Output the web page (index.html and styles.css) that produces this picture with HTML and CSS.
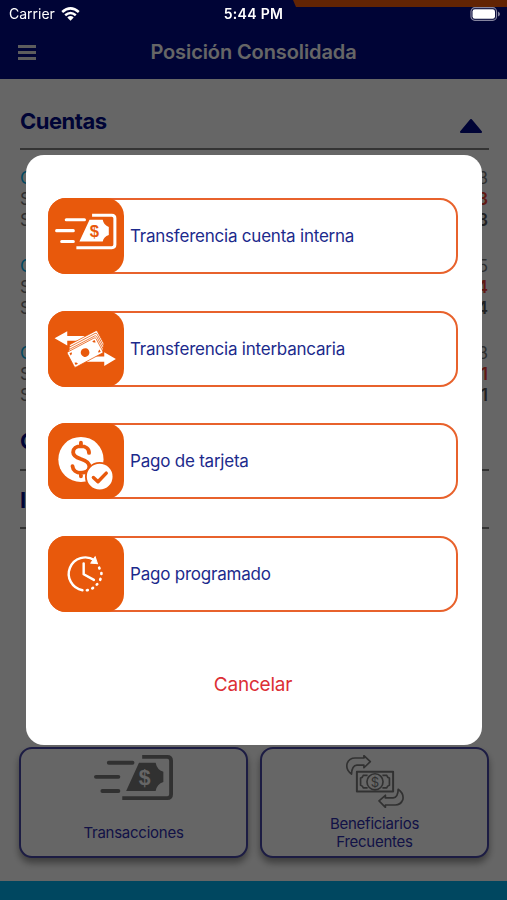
FILE: index.html
```
<!DOCTYPE html>
<html lang="es">

<head>
    <meta charset="UTF-8">
    <meta name="viewport" content="width=device-width, initial-scale=1.0">
    <title>Posición Consolidada</title>
    <link rel="stylesheet" href="styles.css">
</head>

<body>
    <div class="app">
        <div class="header">
            <div class="stripe"></div>
            <div class="menu"><span></span><span></span><span></span></div>
            <h1>Posición Consolidada</h1>
        </div>
        <div class="content">
            <div class="section-title first">
                <h2>Cuentas</h2>
                <svg class="caret" width="22" height="14" viewBox="0 0 22 14"><path d="M11 1 L21 13 H1 Z" fill="#000a87" stroke="#000a87" stroke-width="2" stroke-linejoin="round"/></svg>
            </div>
            <ul class="accounts">
                <li>
                    <p><span class="name">C</span><span>3</span></p>
                    <p><span>S</span><span class="red">3</span></p>
                    <p><span>S</span><span class="bold">3</span></p>
                </li>
                <li>
                    <p><span class="name">C</span><span>5</span></p>
                    <p><span>S</span><span class="red">4</span></p>
                    <p><span>S</span><span class="bold">4</span></p>
                </li>
                <li>
                    <p><span class="name">C</span><span>3</span></p>
                    <p><span>S</span><span class="red">1</span></p>
                    <p><span>S</span><span class="bold">1</span></p>
                </li>
            </ul>
            <div class="section-title"><h2>C</h2></div>
            <div class="section-title"><h2>I</h2></div>
        </div>
        <div class="cards">
            <div class="card">
                <svg class="ico-money" viewBox="6 15.5 61.5 35">
                    <g fill="none" stroke="#7c7c7c" stroke-width="3" stroke-linecap="round">
                        <path d="M17.5 21.5H36M7.5 32.5H25M12.5 43.5H25"/>
                        <path d="M43.5 17H63q3 0 3 3V46q0 3-3 3H28" stroke-linecap="butt"/>
                    </g>
                    <path d="M41 21.5H54Q55 27 60 28.5V36.5Q55 38 54 43.5H31Z" fill="#7c7c7c"/>
                    <text x="45.5" y="38.5" class="dollar gray">$</text>
                </svg>
                <p>Transacciones</p>
            </div>
            <div class="card">
                <svg class="ico-people" viewBox="288 75 172 158" fill="none" stroke="#7c7c7c" stroke-width="5" stroke-linejoin="round">
                    <path d="M304 132Q286 118 291 100Q297 84 315 84H341V77L360 95L341 113V105H320Q305 106 304 132Z"/>
                    <path d="M443 177Q461 190 457 208Q451 224 434 224H405V231L386 212L405 195V203H428Q443 201 443 177Z"/>
                    <path d="M320 125H428V184H320Z" stroke-width="6"/>
                    <path d="M352 136H339Q338 142 331 144V165Q338 167 339 173H352M396 136H409Q410 142 417 144V165Q410 167 409 173H396"/>
                    <circle cx="374" cy="155" r="24"/>
                    <text x="374" y="169" class="dollar-line">$</text>
                </svg>
                <p>Beneficiarios<br>Frecuentes</p>
            </div>
        </div>
        <div class="bottom-bar"></div>
    </div>

    <div class="overlay">
        <div class="modal">
            <div class="option">
                <svg viewBox="0 0 75 75">
                    <g fill="none" stroke="#fff" stroke-width="3" stroke-linecap="round">
                        <path d="M18 21.5H36M8.5 32.2H25M13.5 43H25"/>
                        <path d="M43.5 17H63q3 0 3 3V46q0 3-3 3H28" stroke-linecap="butt"/>
                    </g>
                    <path d="M41 21.5H54Q55 27 60 28.5V36.5Q55 38 54 43H31Z" fill="#fff"/>
                    <text x="45.8" y="38.3" class="dollar">$</text>
                </svg>
                <p>Transferencia cuenta interna</p>
            </div>
            <div class="option">
                <svg viewBox="0 0 75 75">
                    <path d="M6.5 27L19 20V24.7H36V29.3H19V34ZM67 47.3L55.5 40.7V45H38V50H55.5V54.3Z" fill="#fff"/>
                    <g transform="rotate(-28 36.5 40.8)" stroke="#e8590c" stroke-width=".7">
                        <rect x="26" y="27" width="31" height="16" rx="1.5" fill="#fff"/>
                        <rect x="24.5" y="29" width="31" height="16" rx="1.5" fill="#fff"/>
                        <rect x="23" y="31" width="31" height="16" rx="1.5" fill="#fff"/>
                        <rect x="20.5" y="32.5" width="32" height="17" rx="1.5" fill="#fff"/>
                        <path d="M22.5 34.5h2.5q0 2-2.5 2.5zM50.5 34.5h-2.5q0 2 2.5 2.5zM22.5 47.5h2.5q0-2-2.5-2.5zM50.5 47.5h-2.5q0-2 2.5-2.5z" fill="#e8590c" stroke="none"/>
                        <circle cx="36.5" cy="41" r="4.3" fill="#e8590c" stroke="none"/>
                    </g>
                </svg>
                <p>Transferencia interbancaria</p>
            </div>
            <div class="option">
                <svg viewBox="0 0 75 75">
                    <circle cx="32.5" cy="36" r="22.3" fill="#fff"/>
                    <path d="M40.5 29.5C40.5 25.5 37 22.800 32.5 22.8C28 22.8 24.8 25.4 24.8 28.8C24.8 32.5 28 34 32.5 35.5C37.5 37 40.8 39 40.8 43C40.8 46.8 37.5 49.2 32.5 49.2C28 49.2 24.5 46.5 24.2 42.5M32.5 19.5V23M32.5 49V52.5" fill="none" stroke="#e8590c" stroke-width="3.8" stroke-linecap="round"/>
                    <circle cx="51" cy="53" r="13.6" fill="#fff" stroke="#e8590c" stroke-width="1.8"/>
                    <path d="M44.8 53.8L49.3 58L57.5 49.5" fill="none" stroke="#e8590c" stroke-width="3.4" stroke-linecap="round" stroke-linejoin="round"/>
                </svg>
                <p>Pago de tarjeta</p>
            </div>
            <div class="option">
                <svg viewBox="0 0 75 75" fill="none" stroke="#fff" stroke-width="2.4" stroke-linecap="round">
                    <path d="M34 53.5A16.3 16.3 0 1 1 46 24"/>
                    <path d="M46.5 20.5L48.8 27.3L42.3 26.8Z" fill="#fff" stroke-width="1"/>
                    <path d="M50.5 31.2L50.8 32M52.7 36.5V37.5M51.8 42.4L51.5 43.2M48.6 47.5L48.1 48M44.4 51.3L43.7 51.7M39.2 53.4L38.4 53.5" stroke-width="2.6"/>
                    <path d="M35.2 27V37.7L45.3 43.3" stroke-linejoin="round"/>
                </svg>
                <p>Pago programado</p>
            </div>
            <p class="cancel">Cancelar</p>
        </div>
    </div>

    <div class="status">
        <div class="left">
            <span>Carrier</span>
            <svg width="19" height="14" viewBox="0 0 19 14" fill="none" stroke="#fff" stroke-width="2.5">
                <path d="M1.2 5Q9.5 -2.3 17.8 5"/>
                <path d="M4.2 8.2Q9.5 3.7 14.8 8.2"/>
                <path d="M6.3 10.5Q9.5 7.7 12.7 10.5L9.5 13.8Z" fill="#fff" stroke="none"/>
            </svg>
        </div>
        <div class="time">5:44 PM</div>
        <svg class="battery" width="31" height="14" viewBox="0 0 31 14">
            <rect x="1" y=".7" width="25.5" height="12.6" rx="3.8" fill="none" stroke="#85859f" stroke-width="1.2"/>
            <rect x="2.5" y="2.2" width="22.5" height="9.6" rx="2.3" fill="#fff"/>
            <path d="M28 4.5Q30 5.5 30 7Q30 8.5 28 9.5Z" fill="#85859f"/>
        </svg>
    </div>
</body>

</html>
```
FILE: styles.css
```
* {
    margin: 0;
    padding: 0;
    box-sizing: border-box;
}

ul,li {
    list-style: none;
}

body {
    width: 507px;
    height: 900px;
    overflow: hidden;
    font-family: Inter, "Liberation Sans", sans-serif;
    background-color: #fff;
}

.app {
    display: flex;
    flex-direction: column;
    height: 900px;
}

/* header */
.header {
    position: relative;
    display: flex;
    align-items: center;
    height: 79px;
    padding: 25px 18px 0;
    background-color: #000a87;
}

.header .stripe {
    position: absolute;
    top: 0;
    right: 0;
    width: 214px;
    height: 7px;
    background-color: #f45a0c;
    clip-path: polygon(0 0, 100% 0, 100% 100%, 3px 100%);
}

.header .menu {
    display: flex;
    flex-direction: column;
    gap: 3px;
    width: 18px;
}

.header .menu span {
    height: 3px;
    background-color: #e8e8e8;
}

.header h1 {
    flex: 1;
    padding-right: 18px;
    text-align: center;
    font-size: 20px;
    font-weight: 600;
    letter-spacing: -0.1px;
    color: #fff;
}

/* accounts */
.content {
    flex: 1;
    padding: 13px 18px 0 20px;
}

.section-title {
    display: flex;
    justify-content: space-between;
    align-items: center;
    height: 58.5px;
    padding-top: 2px;
    border-bottom: 2px solid #828282;
}

.section-title h2 {
    font-size: 22px;
    font-weight: 700;
    letter-spacing: -0.5px;
    color: #000a87;
}

.section-title.first {
    height: 58px;
}

.section-title .caret {
    position: relative;
    top: 5px;
    right: 7px;
}

.accounts {
    padding: 18px 1px 0 0;
    height: 262px;
}

.accounts li {
    height: 87.5px;
}

.accounts p {
    display: flex;
    justify-content: space-between;
    height: 21px;
    line-height: 21px;
    font-size: 17px;
    color: #777;
}

.accounts .name {
    color: #00b2f0;
}

.accounts .red {
    color: #f04030;
    font-weight: 600;
}

.accounts .bold {
    color: #555;
    font-weight: 600;
}

/* shortcuts */
.cards {
    display: flex;
    gap: 12px;
    height: 134px;
    padding: 0 18px 24px 19px;
}

.card {
    flex: 1;
    display: flex;
    flex-direction: column;
    align-items: center;
    height: 111px;
    border: 2px solid #4646a8;
    border-radius: 13px;
    background-color: #fff;
    box-shadow: 0 5px 7px rgba(0, 0, 0, 0.4);
    color: #2e2eb0;
    font-size: 15px;
    line-height: 17.5px;
    letter-spacing: -0.25px;
    text-align: center;
}

.card .ico-money {
    width: 79px;
    height: 45px;
    margin: 6px 0 24px;
}

.card .ico-people {
    width: 58px;
    height: 53px;
    margin: 6px 0 7px;
}

.bottom-bar {
    height: 19px;
    background-color: #00b2f0;
}

/* modal */
.overlay {
    position: fixed;
    top: 0;
    left: 0;
    width: 507px;
    height: 900px;
    padding: 155px 25px 0 26px;
    background-color: rgba(0, 0, 0, 0.6);
}

.modal {
    display: flex;
    flex-direction: column;
    gap: 36.6px;
    height: 590px;
    padding: 43px 24px 0 22px;
    border-radius: 18px;
    background-color: #fff;
}

.option {
    display: flex;
    align-items: center;
    height: 76px;
    border: 2px solid #e8622c;
    border-radius: 18px;
    font-size: 17px;
    letter-spacing: -0.22px;
    color: #1c2a8c;
}

.option svg {
    flex: none;
    width: 76px;
    height: 76px;
    margin: -2px 6px -2px -2px;
    border-radius: 18px;
    background-color: #e8590c;
}

.dollar {
    font-family: "Liberation Sans", sans-serif;
    font-size: 16.5px;
    font-weight: 700;
    text-anchor: middle;
    letter-spacing: 0;
    fill: #e8590c;
}

.dollar.gray {
    fill: #fff;
}

.dollar-line {
    font-family: Inter, sans-serif;
    font-size: 39px;
    text-anchor: middle;
    fill: #7c7c7c;
    stroke: none;
}

.cancel {
    margin-top: 25px;
    text-align: center;
    font-size: 19px;
    line-height: 24px;
    letter-spacing: -0.2px;
    color: #dc2f35;
}

/* status bar */
.status {
    position: fixed;
    top: 0;
    left: 0;
    display: grid;
    grid-template-columns: 1fr auto 1fr;
    align-items: center;
    width: 507px;
    height: 27px;
    padding: 0 6px 0 9px;
    color: #fff;
    font-size: 14px;
}

.status .left {
    display: flex;
    align-items: center;
    gap: 6px;
}

.status .time {
    margin-right: 3px;
    font-weight: 600;
    letter-spacing: 0.3px;
}

.status .battery {
    justify-self: end;
}
```
